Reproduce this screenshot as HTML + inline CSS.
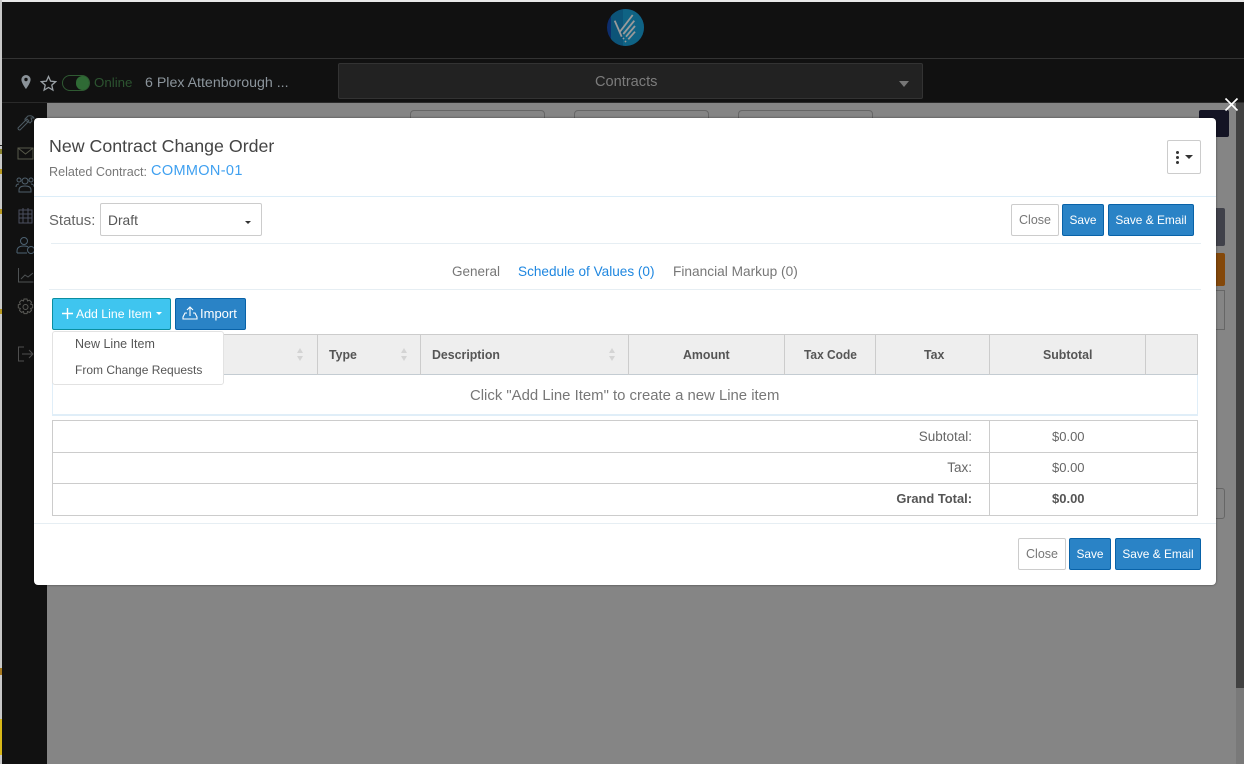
<!DOCTYPE html>
<html>
<head>
<meta charset="utf-8">
<style>
html,body{margin:0;padding:0;width:1244px;height:764px;overflow:hidden;background:#858585;font-family:"Liberation Sans",sans-serif;}
.a{position:absolute;box-sizing:border-box;}
.t{position:absolute;white-space:nowrap;line-height:20px;height:20px;}
.btn{position:absolute;box-sizing:border-box;border-radius:2px;text-align:center;font-size:12.5px;white-space:nowrap;}
.blue{background:#2a83c6;border:1px solid #0862a8;color:#fff;line-height:30px;height:32px;}
.white{background:#fff;border:1px solid #ccc;color:#777;line-height:30px;height:32px;}
.th{position:absolute;top:345px;font-size:13px;font-weight:bold;color:#555;line-height:20px;white-space:nowrap;transform:scaleX(.95);transform-origin:left;}
.v{position:absolute;width:1px;background:#ccc;}
.h{position:absolute;height:1px;}
.se{font-size:11.9px;}
.sv{font-size:11.9px;}
.bot{line-height:31px;}
</style>
</head>
<body>
<!-- header -->
<div class="a" style="left:0;top:0;width:1244px;height:103px;background:#111;"></div>
<div class="a" style="left:0;top:0;width:1244px;height:2px;background:#e8e8e8;"></div>
<div class="a" style="left:0;top:58px;width:1244px;height:1px;background:#333;"></div>
<div class="a" style="left:0;top:102px;width:1244px;height:1px;background:#2a2a2a;"></div>
<!-- sidebar -->
<div class="a" style="left:0;top:0;width:2px;height:764px;background:#c8c8c8;"></div>
<div class="a" style="left:2px;top:103px;width:45px;height:661px;background:#111;"></div>
<div class="a" style="left:0;top:145px;width:2px;height:1px;background:#222;"></div>
<div class="a" style="left:0;top:149px;width:2px;height:5px;background:#8a8430;"></div>
<div class="a" style="left:0;top:169px;width:2px;height:5px;background:#b89a20;"></div>
<div class="a" style="left:0;top:209px;width:2px;height:5px;background:#b89a20;"></div>
<div class="a" style="left:0;top:309px;width:2px;height:5px;background:#b89a20;"></div>
<div class="a" style="left:0;top:668px;width:2px;height:7px;background:#a87a20;"></div>
<div class="a" style="left:0;top:719px;width:2px;height:36px;background:#d8b818;"></div>
<!-- logo -->
<svg class="a" style="left:605px;top:8px;" width="40" height="40" viewBox="0 0 40 40">
<defs><clipPath id="lg"><circle cx="20.500" cy="19.500" r="18.500"/></clipPath></defs>
<circle cx="20.500" cy="19.500" r="18.500" fill="#0d2d6c"/>
<g clip-path="url(#lg)">
<rect x="6" y="0" width="12" height="40" fill="#0c5478"/>
<rect x="18" y="0" width="22" height="40" fill="#0f6384"/>
</g>
<g stroke="#9a9a9a" stroke-width="1.800" fill="none">
<path d="M9.700 12.700l7 16"/><path d="M15 23.700L27.700 7"/><path d="M18.300 26l11-13.300"/><path d="M21 28.700l9-10.700"/><path d="M23.300 31.300l6.700-7.600"/>
<path d="M18 30l1 1"/><path d="M20 33l1 1"/>
</g>
</svg>
<!-- top bar -->
<svg class="a" style="left:19px;top:74px;" width="14" height="16" viewBox="0 0 14 16"><path d="M7 1a4.600 4.600 0 0 0-4.600 4.600C2.400 9 7 15 7 15s4.600-6 4.600-9.400A4.600 4.600 0 0 0 7 1zm0 6.200a1.700 1.700 0 1 1 0-3.400 1.700 1.700 0 0 1 0 3.400z" fill="#8a9298"/></svg>
<svg class="a" style="left:40px;top:75px;" width="17" height="17" viewBox="0 0 17 17"><path d="M8.500 1.500l2.100 4.700 5 .5-3.800 3.400 1.100 5-4.400-2.600-4.400 2.600 1.100-5L1.400 6.700l5-.5z" fill="none" stroke="#9aa0a5" stroke-width="1.300"/></svg>
<div class="a" style="left:62px;top:75px;width:28px;height:16px;border:1px solid #2f5a32;border-radius:8px;"></div>
<div class="a" style="left:76px;top:76px;width:13px;height:14px;background:#2f6a35;border-radius:7px;"></div>
<div class="t" style="left:94px;top:73px;font-size:13.300px;color:#2c5430;">Online</div>
<div class="t" style="left:145px;top:73px;font-size:14.200px;color:#8c959c;">6 Plex Attenborough ...</div>
<div class="a" style="left:338px;top:63px;width:585px;height:36px;background:#222;border:1px solid #333;border-radius:2px;"></div>
<div class="t" style="left:595px;top:72px;font-size:14.600px;color:#7c7c7c;">Contracts</div>
<div class="a" style="left:899px;top:81px;border-left:5px solid transparent;border-right:5px solid transparent;border-top:6px solid #777;"></div>
<!-- sidebar icons -->
<svg class="a" style="left:14px;top:113px;" width="24" height="260" viewBox="0 0 24 260" fill="none" stroke-width="1">
<g stroke="#4d5a62">
<path d="M4 15l9-9 2 2-9 9q-2 0-2-2z"/><path d="M11 6l3-3q4-1 6 2l-3 0 1 3-2 2-5-3z"/>
</g>
<g stroke="#57594a">
<rect x="4" y="35" width="15" height="11" /><path d="M4 35l7.500 6 7.500-6"/>
</g>
<g stroke="#50606c">
<circle cx="11" cy="68" r="3"/><path d="M5 79v-2q0-4 6-4t6 4v2z"/>
<circle cx="5" cy="67" r="2"/><circle cx="17" cy="67" r="2"/><path d="M2 74q0-3 3-3M20 74q0-3-3-3"/>
</g>
<g stroke="#4a4f60">
<rect x="5" y="97" width="13" height="13"/><path d="M5 101h13M5 105h13M9 95v15M14 95v15"/>
</g>
<g stroke="#4d6272">
<circle cx="10" cy="128" r="3.500"/><path d="M3 140v-2q0-5 7-5 3 0 4 1M3 140h10"/><circle cx="17" cy="137" r="3.500"/>
</g>
<g stroke="#4e5254">
<path d="M4.500 155v14h15M7 166l4-4 3 2 5-4"/>
</g>
<g stroke="#5a5a56">
<circle cx="11.500" cy="194" r="2.500"/><path d="M10 186h3l.5 2 2-.8 2 2-.8 2 2 .6v3l-2 .6.8 2-2 2-2-.8-.5 2h-3l-.5-2-2 .8-2-2 .8-2-2-.6v-3l2-.6-.8-2 2-2 2 .8z"/>
</g>
<g stroke="#4e4e4e">
<path d="M10 248H4.500v-14H10M8 241h11M15 237l4 4-4 4"/>
</g>
</svg>
<!-- bg behind modal -->
<div class="a" style="left:410px;top:110px;width:135px;height:12px;border:1px solid #666;border-radius:4px;"></div>
<div class="a" style="left:574px;top:110px;width:135px;height:12px;border:1px solid #666;border-radius:4px;"></div>
<div class="a" style="left:738px;top:110px;width:135px;height:12px;border:1px solid #666;border-radius:4px;"></div>
<div class="a" style="left:1199px;top:110px;width:30px;height:27px;background:#141424;border-radius:2px;"></div>
<div class="a" style="left:1210px;top:208px;width:15px;height:38px;background:#40414a;border-radius:2px;"></div>
<div class="a" style="left:1210px;top:253px;width:15px;height:33px;background:#84480a;border-radius:2px;"></div>
<div class="a" style="left:1210px;top:290px;width:15px;height:40px;border:1px solid #666;"></div>
<div class="a" style="left:1210px;top:488px;width:15px;height:31px;border:1px solid #666;border-radius:3px;"></div>
<div class="a" style="left:1236px;top:103px;width:8px;height:585px;background:#414141;"></div>
<div class="a" style="left:1236px;top:688px;width:8px;height:76px;background:#797979;"></div>
<!-- close x -->
<svg class="a" style="left:1224px;top:97px;" width="15" height="15" viewBox="0 0 15 15"><path d="M1.500 1.500l12 12M13.500 1.500l-12 12" stroke="#fff" stroke-width="1.700"/></svg>
<!-- modal -->
<div class="a" style="left:34px;top:118px;width:1182px;height:467px;background:#fff;border-radius:4px;box-shadow:0 0 2px rgba(0,0,0,.5);"></div>
<div class="t" style="left:49px;top:136px;font-size:17.800px;color:#444;">New Contract Change Order</div>
<div class="t" style="left:49px;top:162px;font-size:12.600px;color:#777;">Related Contract:</div>
<div class="t" style="left:151px;top:161px;font-size:14.500px;letter-spacing:.35px;color:#3fa0f0;">COMMON-01</div>
<div class="a" style="left:1167px;top:140px;width:34px;height:34px;border:1px solid #ccc;border-radius:2px;background:#fff;"></div>
<div class="a" style="left:1176px;top:151px;width:3px;height:3px;border-radius:2px;background:#333;"></div>
<div class="a" style="left:1176px;top:156px;width:3px;height:3px;border-radius:2px;background:#333;"></div>
<div class="a" style="left:1176px;top:161px;width:3px;height:3px;border-radius:2px;background:#333;"></div>
<div class="a" style="left:1185px;top:155px;border-left:4px solid transparent;border-right:4px solid transparent;border-top:4px solid #333;"></div>
<div class="h" style="left:34px;top:196px;width:1182px;background:#dcedf8;"></div>
<div class="t" style="left:49px;top:211px;font-size:14.900px;color:#666;">Status:</div>
<div class="a" style="left:100px;top:203px;width:162px;height:33px;border:1px solid #ccc;border-radius:2px;background:#fff;"></div>
<div class="t" style="left:108px;top:211px;font-size:13.800px;color:#555;">Draft</div>
<div class="a" style="left:245px;top:221px;border-left:3px solid transparent;border-right:3px solid transparent;border-top:3px solid #333;"></div>
<div class="btn white" style="left:1011px;top:204px;width:48px;">Close</div>
<div class="btn blue sv" style="left:1062px;top:204px;width:42px;">Save</div>
<div class="btn blue se" style="left:1108px;top:204px;width:86px;">Save &amp; Email</div>
<div class="h" style="left:51px;top:243px;width:1150px;background:#e6eef3;"></div>
<div class="t" style="left:452px;top:262px;font-size:13.500px;color:#777;">General</div>
<div class="t" style="left:518px;top:262px;font-size:13.600px;color:#1f87e0;">Schedule of Values (0)</div>
<div class="t" style="left:673px;top:262px;font-size:13.700px;color:#777;">Financial Markup (0)</div>
<div class="h" style="left:49px;top:289px;width:1152px;background:#e6eef3;"></div>
<!-- add buttons -->
<div class="btn" style="left:52px;top:298px;width:119px;height:32px;background:#3fc5ef;border:1px solid #0a8ea0;color:#fff;line-height:30px;text-align:left;padding-left:23px;font-size:12.300px;">Add Line Item</div>
<svg class="a" style="left:61px;top:307px;" width="13" height="13" viewBox="0 0 13 13"><path d="M6.500 1v11M1 6.500h11" stroke="#fff" stroke-width="1.400"/></svg>
<div class="a" style="left:156px;top:312px;border-left:3.500px solid transparent;border-right:3.500px solid transparent;border-top:3.500px solid #fff;"></div>
<div class="btn blue" style="left:175px;top:298px;width:71px;text-align:left;padding-left:24px;font-size:13px;">Import</div>
<svg class="a" style="left:182px;top:305px;" width="16" height="16" viewBox="0 0 16 16" fill="none" stroke="#fff" stroke-width="1.100"><path d="M8 11V2M5 5l3-3 3 3"/><path d="M5 8H3l-2 4v2h14v-2l-2-4h-2"/></svg>
<!-- table -->
<div class="a" style="left:52px;top:334px;width:1146px;height:41px;background:#eee;border:1px solid #ccc;border-bottom:1px solid #c4ccd2;"></div>
<div class="v" style="left:317px;top:334px;height:41px;"></div>
<div class="v" style="left:420px;top:334px;height:41px;"></div>
<div class="v" style="left:628px;top:334px;height:41px;"></div>
<div class="v" style="left:784px;top:334px;height:41px;"></div>
<div class="v" style="left:875px;top:334px;height:41px;"></div>
<div class="v" style="left:989px;top:334px;height:41px;"></div>
<div class="v" style="left:1145px;top:334px;height:41px;"></div>
<div class="th" style="left:329px;">Type</div>
<div class="th" style="left:432px;">Description</div>
<div class="th" style="left:683px;">Amount</div>
<div class="th" style="left:804px;transform:scaleX(.92);">Tax Code</div>
<div class="th" style="left:924px;">Tax</div>
<div class="th" style="left:1043px;">Subtotal</div>
<svg class="a" style="left:296px;top:348px;" width="8" height="13" viewBox="0 0 8 13" fill="#d4d4d4"><path d="M4 0l3 5H1zM4 13l3-5H1z"/></svg>
<svg class="a" style="left:400px;top:348px;" width="8" height="13" viewBox="0 0 8 13" fill="#d4d4d4"><path d="M4 0l3 5H1zM4 13l3-5H1z"/></svg>
<svg class="a" style="left:608px;top:348px;" width="8" height="13" viewBox="0 0 8 13" fill="#d4d4d4"><path d="M4 0l3 5H1zM4 13l3-5H1z"/></svg>
<div class="a" style="left:52px;top:375px;width:1146px;height:41px;border:1px solid #e0eef8;border-top:none;border-bottom:2px solid #e0eef8;background:#fff;"></div>
<div class="t" style="left:470px;top:386px;font-size:14.900px;color:#777;">Click "Add Line Item" to create a new Line item</div>
<!-- dropdown -->
<div class="a" style="left:52px;top:331px;width:172px;height:54px;background:#fff;border:1px solid #e2e2e2;border-radius:3px;"></div>
<div class="t" style="left:75px;top:334px;font-size:12.500px;color:#555;">New Line Item</div>
<div class="t" style="left:75px;top:360px;font-size:12px;color:#555;">From Change Requests</div>
<!-- totals -->
<div class="a" style="left:52px;top:420px;width:1146px;height:96px;border:1px solid #ccc;"></div>
<div class="h" style="left:52px;top:452px;width:1146px;background:#ccc;"></div>
<div class="h" style="left:52px;top:483px;width:1146px;background:#ccc;"></div>
<div class="v" style="left:989px;top:420px;height:96px;"></div>
<div class="t" style="right:272px;top:427px;font-size:13.500px;color:#666;">Subtotal:</div>
<div class="t" style="right:272px;top:458px;font-size:13.500px;color:#666;">Tax:</div>
<div class="t" style="right:272px;top:489px;font-size:12.900px;font-weight:bold;color:#555;">Grand Total:</div>
<div class="t" style="left:1052px;top:427px;font-size:13px;color:#666;">$0.00</div>
<div class="t" style="left:1052px;top:458px;font-size:13px;color:#666;">$0.00</div>
<div class="t" style="left:1052px;top:489px;font-size:13px;font-weight:bold;color:#555;">$0.00</div>
<div class="h" style="left:34px;top:523px;width:1182px;background:#e6eef3;"></div>
<div class="btn white bot" style="left:1018px;top:538px;width:48px;">Close</div>
<div class="btn blue sv bot" style="left:1069px;top:538px;width:42px;">Save</div>
<div class="btn blue se bot" style="left:1115px;top:538px;width:86px;">Save &amp; Email</div>
</body>
</html>
